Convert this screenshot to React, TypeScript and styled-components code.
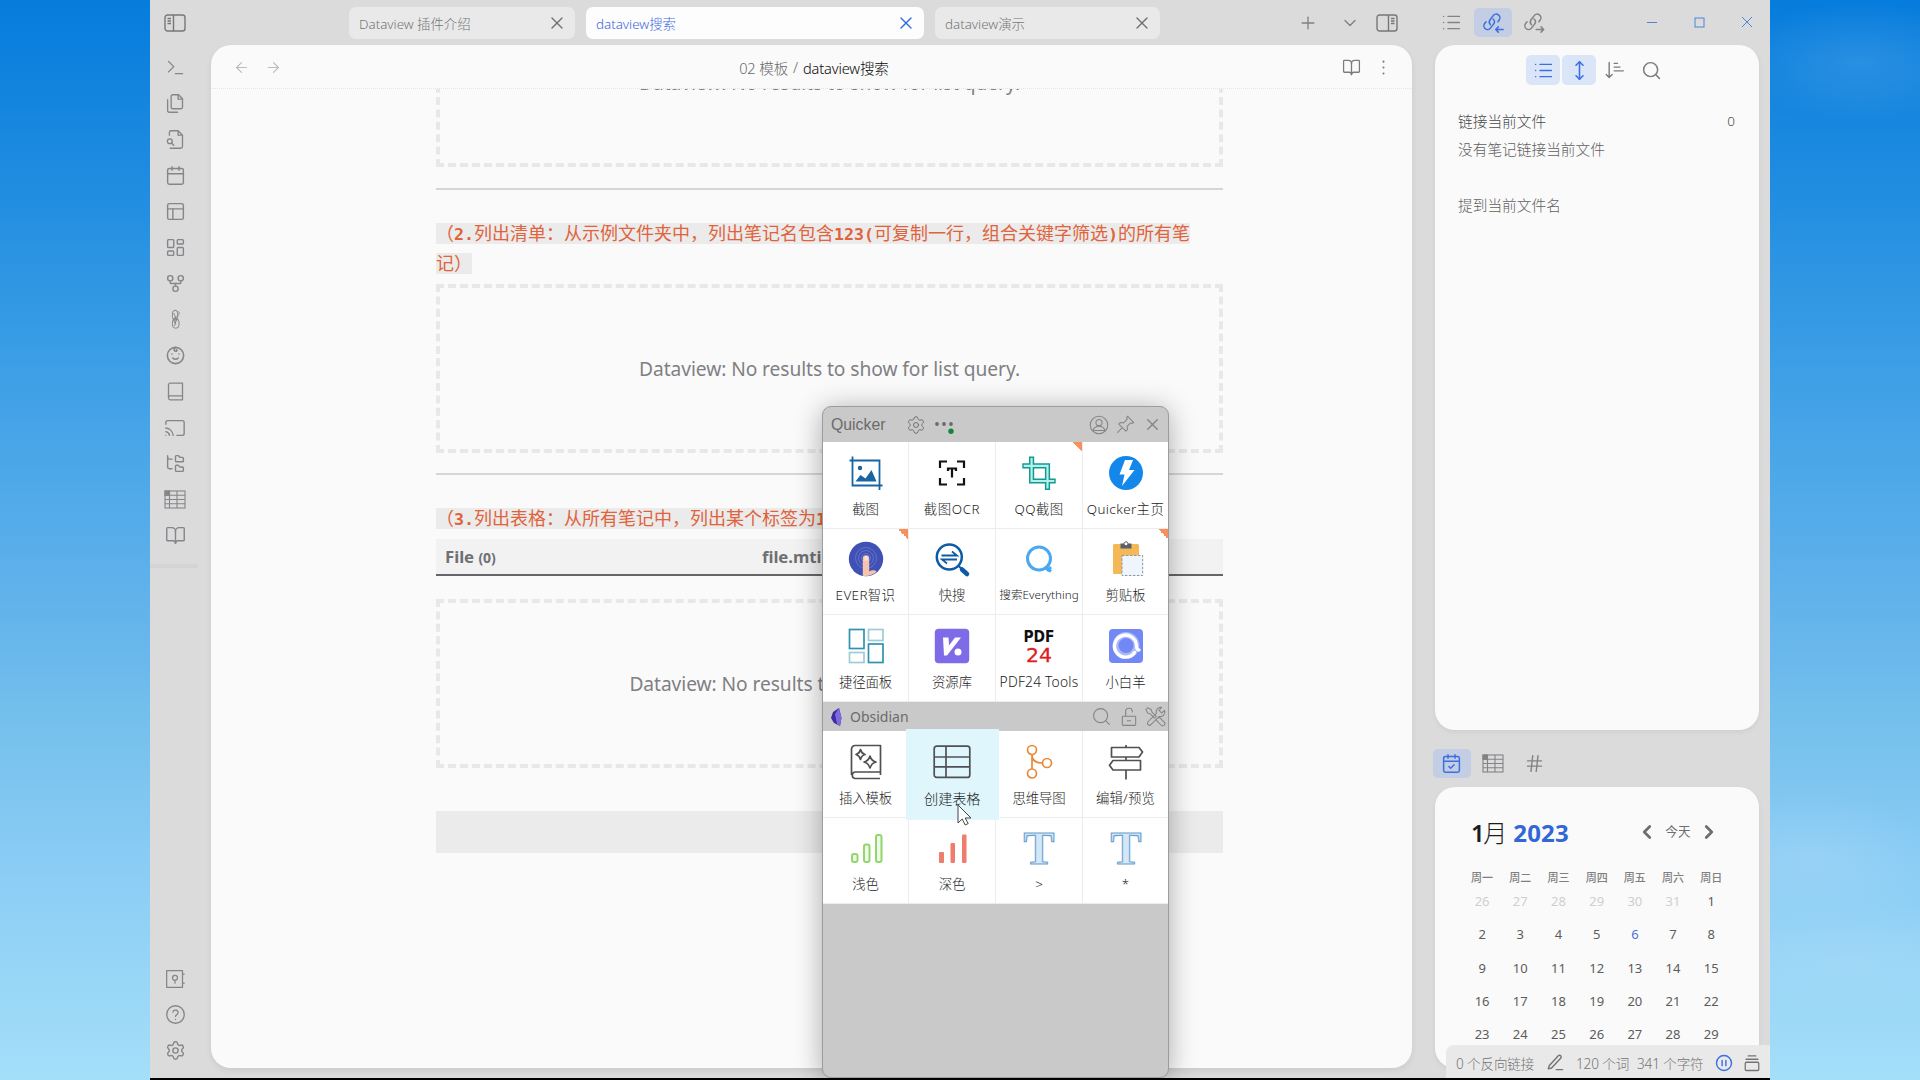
import React from "react";
import styled, { createGlobalStyle, css } from "styled-components";
import {
  Terminal, Calendar, PanelsTopLeft, LayoutDashboard, GitFork, Cast, FolderTree, BookOpen,
  Settings, List, MoveVertical, ArrowLeft, ArrowRight, X, Plus, ChevronDown, Search, Hash,
  ChevronLeft, ChevronRight,
} from "lucide-react";

const sans = `"Noto Sans", "Noto Sans CJK SC", sans-serif`;

const GlobalStyle = createGlobalStyle`
  * { box-sizing: border-box; }
  body { margin: 0; overflow: hidden; font-family: ${sans}; }
  svg { display: block; flex: none; overflow: visible; }
`;

/* ---------- shell ---------- */

const Desktop = styled.div`
  width: 1920px;
  height: 1080px;
  padding-left: 150px;
  background:
    radial-gradient(ellipse 130px 60px at 1860px 62px, rgba(150, 200, 245, 0.2), transparent),
    radial-gradient(ellipse 130px 70px at 1810px 860px, rgba(190, 225, 250, 0.28), transparent),
    radial-gradient(ellipse 180px 60px at 1850px 960px, rgba(190, 225, 250, 0.22), transparent),
    linear-gradient(#067cdc 0, #1f8ce0 180px, #3d9fe6 370px, #66b5ec 630px, #74c0ec 720px, #88cbf4 850px, #a4dff9 1080px);
`;

const Window = styled.div`
  position: relative;
  display: grid;
  grid-template-columns: 61px 1201px 324px;
  column-gap: 0;
  width: 1620px;
  height: 1080px;
  background: #dbdbdb;
  border-bottom: 2px solid #000;
`;

/* ---------- ribbon ---------- */

const Ribbon = styled.nav`
  display: flex;
  flex-direction: column;
  padding: 0 11px 9.5px 0;
  color: #85858a;
`;

const RibbonToggle = styled.div`
  display: flex;
  align-items: center;
  justify-content: center;
  height: 45.5px;
  margin-bottom: 4px;
`;

const RibbonItem = styled.div`
  display: flex;
  align-items: center;
  justify-content: center;
  height: 36px;
`;

const RibbonRule = styled.div`
  width: 48px;
  height: 4px;
  margin-top: 10px;
  background: #d4d4d4;
`;

const Spacer = styled.div`
  flex: 1;
`;

/* ---------- editor ---------- */

const Main = styled.main`
  display: flex;
  flex-direction: column;
  height: 1078px;
`;

const TabBar = styled.div`
  display: flex;
  align-items: center;
  height: 45px;
  padding: 1px 0 0 138px;
  color: #808085;
`;

const Tab = styled.div<{ $w: number; $active?: boolean }>`
  display: flex;
  align-items: center;
  justify-content: space-between;
  width: ${p => p.$w}px;
  height: 32px;
  margin-right: 11px;
  padding: 0 8px 1px 10px;
  border-radius: 7px;
  background: ${p => (p.$active ? "#fdfdfd" : "#e9e9e9")};
  color: ${p => (p.$active ? "#4068dc" : "#777777")};
  font-size: 13.4px;
  letter-spacing: -0.02px;
  font-weight: 300;
`;

const TabClose = styled.span<{ $active?: boolean }>`
  color: ${p => (p.$active ? "#2f6be0" : "#707070")};
`;

const BarIcon = styled.div<{ $ml: number }>`
  margin-left: ${p => p.$ml}px;
`;

const Page = styled.section`
  display: flex;
  flex-direction: column;
  height: 1023px;
  border-radius: 20px;
  overflow: hidden;
  background: #fafafa;
  box-shadow: 0 3px 6px rgba(0, 0, 0, 0.07);
`;

const PageHeader = styled.header`
  display: grid;
  grid-template-columns: 1fr auto 1fr;
  align-items: center;
  flex: none;
  height: 44px;
  padding-top: 2px;
  border-bottom: 1px dotted #e4e4e4;
  color: #7c7c7c;
`;

const NavArrows = styled.div`
  display: flex;
  gap: 15px;
  padding-left: 22px;
  color: #bcbcbc;
`;

const Crumb = styled.div`
  display: flex;
  gap: 5px;
  font-size: 14.6px;
  letter-spacing: -0.15px;
  font-weight: 300;
  color: #6a6a6a;
  padding-left: 5px;
`;

const CrumbCurrent = styled.span`
  color: #080808;
`;

const PageActions = styled.div`
  display: flex;
  justify-content: flex-end;
  align-items: center;
  gap: 13px;
  padding-right: 19.5px;
`;

const Scroller = styled.div`
  flex: 1;
  min-height: 0;
  overflow: hidden;
`;

const Doc = styled.div`
  width: 787px;
  margin-left: 225px;
`;

const EmptyResult = styled.div<{ $mt: number }>`
  display: flex;
  align-items: center;
  justify-content: center;
  height: 169px;
  margin-top: ${p => p.$mt}px;
  border: 4px dashed #e8e8e8;
  color: #808084;
  font-size: 19.2px;
  letter-spacing: -0.07px;
`;

const Rule = styled.div<{ $mt: number }>`
  height: 2px;
  margin-top: ${p => p.$mt}px;
  background: #d6d6d6;
`;

const Para = styled.div`
  display: flex;
  flex-direction: column;
  margin-top: 28px;
`;

const CodeLine = styled.div`
  display: flex;
  align-items: center;
  height: 30.5px;
`;

const Code = styled.code`
  height: 21px;
  line-height: 18px;
  white-space: nowrap;
  background: #ebebeb;
  color: #e0633c;
  font-family: "Noto Sans CJK SC", sans-serif;
  font-size: 18px;
  font-weight: 400;
`;

const Mono = styled.b`
  font-family: "DejaVu Sans Mono", monospace;
  font-size: 16.6px;
`;

const TableHead = styled.div`
  display: grid;
  grid-template-columns: 317px 1fr;
  align-items: center;
  height: 37.5px;
  margin-top: 5px;
  padding: 1px 0 0 9px;
  background: #f2f2f3;
  border-bottom: 2px solid #66666a;
  color: #707074;
  font-size: 16.8px;
  letter-spacing: -0.05px;
  font-weight: 700;
`;

const Count = styled.span`
  font-size: 14px;
`;

const CodeBlock = styled.div`
  height: 42px;
  margin-top: 43px;
  background: #ebebeb;
`;

/* ---------- right side ---------- */

const Side = styled.aside`
  display: flex;
  flex-direction: column;
  width: 338px;
  margin-left: 20px;
  height: 1078px;
`;

const SideTabs = styled.div<{ $h: number; $pt: number }>`
  display: flex;
  align-items: flex-start;
  flex: none;
  height: ${p => p.$h}px;
  padding-top: ${p => p.$pt}px;
`;

const SideTab = styled.div<{ $active?: boolean; $ml?: number }>`
  display: flex;
  align-items: center;
  justify-content: center;
  width: 38px;
  height: 29px;
  margin-left: ${p => p.$ml ?? 3.5}px;
  border-radius: 5px;
  color: #838387;
  ${p => p.$active && css`
    background: #c3cde3;
    color: #3b70e2;
  `}
`;

const WindowButtons = styled.div`
  display: flex;
  align-items: center;
  gap: 37px;
  height: 28px;
  margin-left: 93px;
  color: #4c84dc;
`;

const Card = styled.section<{ $h: number }>`
  flex: none;
  width: 324px;
  height: ${p => p.$h}px;
  margin-left: 3px;
  border-radius: 20px;
  background: #fafafa;
  box-shadow: 0 2px 5px rgba(0, 0, 0, 0.06);
`;

const LinkTools = styled.div`
  display: flex;
  gap: 2px;
  padding: 10px 0 0 91px;
  color: #7c7c7c;
`;

const Tool = styled.div<{ $active?: boolean }>`
  display: flex;
  align-items: center;
  justify-content: center;
  width: 34px;
  height: 30px;
  border-radius: 5px;
  ${p => p.$active && css`
    background: #dbe5f8;
    color: #3b70e2;
  `}
`;

const LinkRow = styled.div<{ $mt: number; $c: string }>`
  display: flex;
  justify-content: space-between;
  align-items: center;
  height: 24px;
  margin-top: ${p => p.$mt}px;
  padding: 0 24px 0 23px;
  color: ${p => p.$c};
  font-size: 14.7px;
  font-weight: 300;
`;

const Zero = styled.span`
  font-size: 13.5px;
`;

const CalHead = styled.div`
  display: flex;
  align-items: center;
  height: 34px;
  padding: 0 39px 0 36px;
  margin-top: 29px;
`;

const Month = styled.div`
  display: flex;
  gap: 6px;
  align-items: center;
  color: #1c1c1c;
  font-size: 24px;
  font-weight: 300;
  line-height: 34px;
`;

const MonthNo = styled.span`
  font-weight: 600;
  letter-spacing: -1.5px;
`;

const Year = styled.span`
  color: #3267d6;
  font-weight: 700;
  letter-spacing: 0.2px;
`;

const CalNav = styled.div`
  display: flex;
  align-items: center;
  gap: 7.5px;
  margin-left: auto;
  color: #6e6e6e;
  font-size: 12.6px;
  line-height: 20px;
  padding-bottom: 2px;
`;

const CalGrid = styled.div<{ $row: number; $up?: number }>`
  display: grid;
  grid-template-columns: repeat(7, 38.2px);
  grid-auto-rows: ${p => p.$row}px;
  align-items: center;
  justify-items: center;
  margin-top: ${p => -(p.$up ?? 0)}px;
  padding-left: 28px;
`;

const WeekDay = styled.span`
  color: #808080;
  font-size: 11px;
  font-weight: 500;
`;

const Day = styled.span<{ $tone: "out" | "now" | "in" }>`
  color: ${p => ({ out: "#cfcfcf", now: "#4a72dc", in: "#5c5c5c" })[p.$tone]};
  font-size: 13px;
`;

const StatusBar = styled.footer`
  position: absolute;
  right: 0;
  bottom: 0;
  display: flex;
  align-items: center;
  width: 324px;
  height: 33px;
  padding: 2px 10px 0 10px;
  border-radius: 8px 0 0 0;
  background: #e9e9e9;
  color: #747474;
  font-size: 13.6px;
  letter-spacing: -0.15px;
  font-weight: 300;
`;

const StatusItem = styled.span<{ $w: number; $blue?: boolean }>`
  display: flex;
  flex: none;
  width: ${p => p.$w}px;
  white-space: nowrap;
  ${p => p.$blue && css`color: #3b70e2;`}
`;

/* ---------- quicker popup ---------- */

const Popup = styled.div`
  position: absolute;
  left: 672px;
  top: 406px;
  display: flex;
  flex-direction: column;
  width: 347px;
  height: 671.5px;
  border: 1px solid #9c9c9c;
  border-radius: 9px;
  background: #c9c9c9;
  box-shadow: 0 3px 28px rgba(0, 0, 0, 0.32);
`;

const PopupHead = styled.div<{ $h: number; $pr: number }>`
  display: flex;
  align-items: center;
  flex: none;
  height: ${p => p.$h}px;
  padding: 0 ${p => p.$pr}px 0 8px;
  color: #6b6b6b;
`;

const PopupTitle = styled.span<{ $w: number }>`
  width: ${p => p.$w}px;
  font-family: "Liberation Sans", sans-serif;
  font-size: 15.8px;
`;

const ProfileTitle = styled.span`
  margin-left: 8px;
  font-size: 14px;
`;

const HeadIcons = styled.div<{ $gap: number }>`
  display: flex;
  align-items: center;
  gap: ${p => p.$gap}px;
  margin-left: auto;
  color: #858585;
`;

const Dots = styled.div`
  margin-left: 8px;
`;

const Tiles = styled.div`
  display: grid;
  grid-template-columns: 86px 87px 87px 85px;
  grid-auto-rows: 86.7px;
  flex: none;
  background: #fff;
`;

const Tile = styled.div<{ $flag?: boolean; $hover?: boolean }>`
  display: flex;
  flex-direction: column;
  align-items: center;
  padding-top: 12.7px;
  border-right: 1px solid #ececec;
  border-bottom: 1px solid #ececec;
  &:nth-child(4n) { border-right: 0; }
  ${p => p.$flag && css`
    background: linear-gradient(to top right, transparent 50%, #f98f5c 50%) top right / 10px 10px no-repeat;
  `}
  ${p => p.$hover && css`
    margin: -2.5px -2.5px -2.5px -3px;
    padding-top: 15px;
    border: 0;
    background: #dff6fd;
    z-index: 1;
  `}
`;

const TileLabel = styled.span<{ $size: number; $ls: number; $mt: number }>`
  height: 20px;
  margin-top: ${p => p.$mt}px;
  line-height: 20px;
  color: #1c1c1c;
  font-size: ${p => p.$size}px;
  letter-spacing: ${p => p.$ls}px;
  font-weight: 300;
  white-space: nowrap;
`;

const Pointer = styled.div`
  position: absolute;
  z-index: 2;
  left: 807px;
  top: 804px;
`;

/* ---------- drawings ---------- */

type IconProps = { size?: number; sw?: number; children: React.ReactNode };
const Glyph = ({ size = 21, sw = 1.5, children }: IconProps) => (
  <svg width={size} height={size} viewBox="0 0 24 24" fill="none" stroke="currentColor" strokeWidth={sw} strokeLinecap="round" strokeLinejoin="round">{children}</svg>
);

const SidebarToggle = ({ right }: { right?: boolean }) => (
  <svg width="22" height="18" viewBox="0 0 22 18" fill="none" stroke="#77777b" strokeWidth="1.4">
    <rect x="1" y="1" width="20" height="16" rx="2.5" />
    <path d={right ? "M12.5 1v16M15 4.5h3.500M15 7h3.500M15 9.500h3.500" : "M9.500 1v16M3.500 4.500h3.500M3.500 7h3.500M3.500 9.500h3.500"} />
  </svg>
);

const SheetIcon = () => (
  <svg width="22" height="19" viewBox="0 0 22 19" fill="none" stroke="currentColor" strokeWidth="1.1">
    <rect x="1" y="1" width="20" height="17" />
    <path d="M5.5 1v17M13 1v17M1 5.3h20M1 9.5h20M1 13.7h20" />
    <rect x="1" y="1" width="4.5" height="4.3" fill="currentColor" />
  </svg>
);

const LinkIcon = ({ out }: { out?: boolean }) => (
  <Glyph size={21} sw={1.7}>
    <path d="M8.500 14.500a4.300 4.300 0 0 1-.4-5.600l3.600-4.800a4.200 4.200 0 0 1 6.800 5l-1.500 2" />
    <path d="M11.500 8a4.300 4.300 0 0 1 .6 5.800l-3.600 4.600a4.200 4.200 0 0 1-6.600-5.200l1.600-2" />
    {out ? <path d="M14 20h8M19.500 17l3 3-3 3" /> : <path d="M15 20h8M17.500 17l-3 3 3 3" />}
  </Glyph>
);

const ribbonIcons = [
  <Terminal size={21} strokeWidth={1.6} />,
  <Glyph>
    <path d="M15.500 2H8.600c-.4 0-.8.2-1.100.5-.3.3-.5.7-.5 1.100v12.800c0 .4.2.8.5 1.100.3.3.7.5 1.100.5h9.800c.4 0 .8-.2 1.100-.5.3-.3.5-.7.5-1.100V6.500L15.500 2z" />
    <path d="M3 7.600v12.800c0 .4.2.8.5 1.100.3.3.7.5 1.100.5h9.800M15 2v5h5" />
  </Glyph>,
  <Glyph>
    <path d="M5 7V4a2 2 0 0 1 2-2h8l5 5v13a2 2 0 0 1-2 2H6M15 2v5h5" />
    <circle cx="5.500" cy="14" r="2.800" /><path d="M7.600 16.200L10 18.600" />
  </Glyph>,
  <Calendar size={21} strokeWidth={1.6} />,
  <PanelsTopLeft size={21} strokeWidth={1.6} />,
  <LayoutDashboard size={21} strokeWidth={1.6} />,
  <GitFork size={21} strokeWidth={1.6} />,
  <Glyph size={21} sw={1.1}>
    <rect x="8.500" y="1.500" width="6" height="11" rx="3" /><rect x="8.500" y="11" width="7.500" height="11" rx="3.700" />
    <path d="M15 3c3 1 1 3-1 5s-5 4-3 6 4-3 1-4-3 4 0 7M10 5l3 6M13 12l-2 7" />
  </Glyph>,
  <Glyph sw={1.8}>
    <circle cx="12" cy="12" r="9.300" />
    <path d="M12 2.800c-2.500 1.200-2 4.200.3 4.400 1.400 0 1.700-1.400.7-1.700M8 10.300v.1M16 10.300v.1M9 15c1.800 1.500 4.200 1.500 6 0" />
  </Glyph>,
  <Glyph><path d="M4 19.500V4.500A2 2 0 0 1 6 2.500h14v19H6a2 2 0 0 1-2-2 2 2 0 0 1 2-2.500h14" /></Glyph>,
  <Cast size={22} strokeWidth={1.5} />,
  <FolderTree size={21} strokeWidth={1.6} />,
  <SheetIcon />,
  <BookOpen size={21} strokeWidth={1.6} />,
];

const Shot = () => (
  <g stroke="#1765a3" strokeWidth="1.800" fill="none">
    <path d="M1.500 5.500H31.500V35M4.500 1.500V30.500H34.500" />
    <circle cx="12" cy="13" r="2.200" fill="#1765a3" stroke="none" />
    <path d="M7.500 26.500l5-6.500 5 3.500 6-8.500 5 11.500z" fill="#1765a3" stroke="none" />
  </g>
);
const Ocr = () => (
  <g>
    <path d="M6 13V6.500h7M23 6.500h7V13M30 23v6.500h-7M13 29.500H6V23" stroke="#111" strokeWidth="2.200" fill="none" />
    <path d="M14 16v-2.500h8V16M18 13.500v9" stroke="#111" strokeWidth="2.200" fill="none" />
  </g>
);
const QqShot = () => (
  <g fill="none">
    <path d="M10.600 1.500V26H34.700M1.300 10.800H26.500V35" stroke="#129a90" strokeWidth="5.200" />
    <path d="M10.600 2.900V26H33.300M2.700 10.800H26.500V33.600" stroke="#b5f1ec" strokeWidth="2.200" />
  </g>
);
const Bolt = () => (
  <g><circle cx="18" cy="18" r="17" fill="#1488ea" /><path d="M17 5h8l-4 10h5.500L14 31l2.500-11.500H11.500z" fill="#fff" /></g>
);
const Touch = () => (
  <g>
    <circle cx="18" cy="18" r="17.200" fill="#3f51b5" />
    <g fill="none" stroke="#6a78d0" strokeWidth=".8"><circle cx="18" cy="17" r="4.500" /><circle cx="18" cy="17" r="7.500" /><circle cx="18" cy="17" r="10.500" /></g>
    <path d="M14.800 34.800V17.500a3.200 3.200 0 0 1 6.400 0v13c3-2 6-1 7.500 0a17 17 0 0 1-13.900 4.300z" fill="#f6c4ae" />
    <path d="M16.500 16.500a1.600 1.600 0 0 1 3.200 0v3h-3.200z" fill="#fbe3da" />
  </g>
);
const QuickSearch = () => (
  <g stroke="#0d5ba6" fill="none">
    <circle cx="15.300" cy="16" r="12.500" strokeWidth="2.500" />
    <path d="M24.500 25l4 3.500" strokeWidth="2" /><path d="M28 28.500l5 4.500" strokeWidth="4.500" strokeLinecap="round" />
    <path d="M7.500 14.500H23l-5-4M23 18.500H8l5 4" strokeWidth="1.800" />
  </g>
);
const Everything = () => (
  <g fill="none" stroke="#4aa8f2"><circle cx="18" cy="17.500" r="11.500" strokeWidth="3" /><path d="M24 26l6 4.500M30 26l-4 4" strokeWidth="3" /></g>
);
const Clip = () => (
  <g>
    <rect x="5" y="3" width="26" height="30" rx="1.500" fill="#f4b856" />
    <path d="M12.500 2.500h11v5h-11z" fill="#5d5f66" /><circle cx="18" cy="2.800" r="2" fill="#fff" stroke="#5d5f66" />
    <rect x="14" y="14.500" width="20.700" height="20" fill="#eef5fc" stroke="#8a98a8" strokeDasharray="2.500 1.500" />
  </g>
);
const Shortcuts = () => (
  <g fill="#fff" strokeWidth="1.700">
    <rect x="1.500" y="1.500" width="14.500" height="19" stroke="#2f93b0" /><rect x="20.500" y="1.500" width="14.500" height="11" stroke="#9fcbd6" />
    <rect x="1.500" y="24.500" width="14.500" height="10" stroke="#9fcbd6" /><rect x="20.500" y="16" width="14.500" height="18.500" stroke="#2f93b0" />
  </g>
);
const Library = () => (
  <g><rect x=".8" y=".8" width="34.400" height="34.400" rx="4" fill="#7d6be8" /><path d="M9 9.500h5.500l.5 8 6-8h6L13 27.500h-3z" fill="#fff" /><circle cx="24" cy="24" r="3.500" fill="#fff" /></g>
);
const Pdf24 = () => (
  <g textAnchor="middle" fontFamily="DejaVu Sans">
    <text x="18" y="14" fontSize="15" fontWeight="700" fill="#111" textLength="31" lengthAdjust="spacingAndGlyphs">PDF</text>
    <text x="18" y="33.500" fontSize="20" fill="#e01c1c" stroke="#e01c1c" strokeWidth=".3" textLength="26" lengthAdjust="spacingAndGlyphs">24</text>
  </g>
);
const Sheep = () => (
  <g><rect x="1" y="1" width="34" height="34" rx="4" fill="#7288f4" /><circle cx="18" cy="17.500" r="10.500" fill="none" stroke="#a9b7fb" strokeWidth="6" /><path d="M26.500 24.500a11 11 0 1 1 2-7c0 4 1 4.500 2.500 4.500" fill="none" stroke="#fff" strokeWidth="3.400" strokeLinecap="round" /></g>
);
const dark = { stroke: "#505054", strokeWidth: 1.7, fill: "none", strokeLinejoin: "round" as const };
const Template = () => (
  <g {...dark}>
    <path d="M3.500 31V5a3.500 3.500 0 0 1 3.500-3.500H32.500V28H7a3.300 3.300 0 0 0 0 6.500H32M32.500 28v3" />
    <path d="M12.500 5.500q1 4 4.500 5-3.500 1-4.500 5-1-4-4.500-5 3.500-1 4.500-5zM22 12q1.500 5 6 6-4.500 1-6 6-1.500-5-6-6 4.500-1 6-6z" />
  </g>
);
const Grid = () => (
  <g {...dark}><rect x=".2" y="2.200" width="35.600" height="31.200" rx="2.500" /><path d="M12 2.200V33.400M.2 13h35.600M.2 22.800h35.600" /></g>
);
const Mind = () => (
  <g stroke="#e8893a" strokeWidth="1.700" fill="none"><circle cx="11" cy="6" r="4.500" /><circle cx="11" cy="29.500" r="4.500" /><circle cx="26" cy="19" r="4.500" /><path d="M11 10.500V25M11 11c0 6 4 8 10.500 8" /></g>
);
const Signs = () => (
  <g {...dark}><path d="M18 1v2.500M18 13v3.500M18 26v9.500M3.500 3.500H31l3.500 4.500L31 13H3.500zM5 16.500H32.500V26H5L1.500 21.200z" /></g>
);
const LightBars = () => (
  <g fill="#f0faeb" stroke="#92d66c" strokeWidth="2"><rect x="4" y="24" width="5.500" height="8" rx="2" /><rect x="16" y="14.500" width="5.500" height="17.500" rx="2" /><rect x="28" y="5" width="5.500" height="27" rx="2" /></g>
);
const DarkBars = () => (
  <g fill="#ee7d6e"><rect x="5" y="22" width="5" height="11" rx="1" /><rect x="16.500" y="13" width="4.500" height="20" rx="1" /><rect x="28" y="4.500" width="4.500" height="28.500" rx="1" /></g>
);
const Tee = () => (
  <text x="18" y="34" fontSize="46" fontWeight="700" fontFamily="Liberation Serif" textAnchor="middle" fill="#d3e8f7" stroke="#6f9fce" strokeWidth="1.100" textLength="31" lengthAdjust="spacingAndGlyphs">T</text>
);

type TileDef = { label: string; art: React.ReactNode; flag?: boolean; hover?: boolean; size?: number; ls?: number };
const globalTiles: TileDef[] = [
  { label: "截图", art: <Shot /> },
  { label: "截图OCR", art: <Ocr />, ls: 0.6 },
  { label: "QQ截图", art: <QqShot />, flag: true, ls: 0.4 },
  { label: "Quicker主页", art: <Bolt />, ls: 0.4 },
  { label: "EVER智识", art: <Touch />, flag: true, ls: 0.4 },
  { label: "快搜", art: <QuickSearch /> },
  { label: "搜索Everything", art: <Everything />, size: 11.6, ls: 0.05 },
  { label: "剪贴板", art: <Clip />, flag: true },
  { label: "捷径面板", art: <Shortcuts /> },
  { label: "资源库", art: <Library /> },
  { label: "PDF24 Tools", art: <Pdf24 />, size: 13.8, ls: 0.2 },
  { label: "小白羊", art: <Sheep /> },
];
const obsidianTiles: TileDef[] = [
  { label: "插入模板", art: <Template /> },
  { label: "创建表格", art: <Grid />, hover: true, size: 14.2 },
  { label: "思维导图", art: <Mind /> },
  { label: "编辑/预览", art: <Signs />, ls: 0.2 },
  { label: "浅色", art: <LightBars /> },
  { label: "深色", art: <DarkBars /> },
  { label: ">", art: <Tee /> },
  { label: "*", art: <Tee /> },
];

const TileGrid = ({ items }: { items: TileDef[] }) => (
  <Tiles>
    {items.map(t => (
      <Tile key={t.label} $flag={t.flag} $hover={t.hover}>
        <svg width="36" height="36" viewBox="0 0 36 36">{t.art}</svg>
        <TileLabel $size={t.size ?? 13.4} $ls={t.ls ?? -0.1} $mt={t.hover ? 9 : 8}>{t.label}</TileLabel>
      </Tile>
    ))}
  </Tiles>
);

const weekDays = ["周一", "周二", "周三", "周四", "周五", "周六", "周日"];
const days = [26, 27, 28, 29, 30, 31, ...Array.from({ length: 29 }, (_, i) => i + 1)];

export default function App() {
  return (
    <Desktop>
      <GlobalStyle />
      <Window>
        <Ribbon>
          <RibbonToggle><SidebarToggle /></RibbonToggle>
          {ribbonIcons.map((icon, i) => <RibbonItem key={i}>{icon}</RibbonItem>)}
          <RibbonRule />
          <Spacer />
          <RibbonItem>
            <Glyph size={20}><path d="M2 2h19v20H2zM21 6h2M21 17h2M12 13.500V17" /><circle cx="12" cy="10.500" r="3" /></Glyph>
          </RibbonItem>
          <RibbonItem>
            <Glyph><circle cx="12" cy="12" r="10" /><path d="M9 9.200a3 3 0 0 1 5.900.8c0 2-2.900 2.600-2.900 4.200M12 17.500v.1" /></Glyph>
          </RibbonItem>
          <RibbonItem><Settings size={21} strokeWidth={1.6} /></RibbonItem>
        </Ribbon>

        <Main>
          <TabBar>
            <Tab $w={226}>Dataview 插件介绍<TabClose><X size={20} strokeWidth={1.6} /></TabClose></Tab>
            <Tab $w={338} $active>dataview搜索<TabClose $active><X size={20} strokeWidth={1.6} /></TabClose></Tab>
            <Tab $w={225}>dataview演示<TabClose><X size={20} strokeWidth={1.6} /></TabClose></Tab>
            <BarIcon $ml={127}><Plus size={20} strokeWidth={1.6} /></BarIcon>
            <BarIcon $ml={22}><ChevronDown size={20} strokeWidth={1.6} /></BarIcon>
            <BarIcon $ml={16}><SidebarToggle right /></BarIcon>
          </TabBar>
          <Page>
            <PageHeader>
              <NavArrows><ArrowLeft size={17} strokeWidth={1.600} /><ArrowRight size={17} strokeWidth={1.600} /></NavArrows>
              <Crumb><span>02 模板</span><span>/</span><CrumbCurrent>dataview搜索</CrumbCurrent></Crumb>
              <PageActions>
                <BookOpen size={19} strokeWidth={1.600} />
                <Glyph size={19} sw={2.600}><path d="M12 4.500v.1M12 12v.1M12 19.500v.1" /></Glyph>
              </PageActions>
            </PageHeader>
            <Scroller>
              <Doc>
                <EmptyResult $mt={-91}>Dataview: No results to show for list query.</EmptyResult>
                <Rule $mt={21} />
                <Para>
                  <CodeLine>
                    <Code>（<Mono>2.</Mono>列出清单：从示例文件夹中，列出笔记名包含<Mono>123(</Mono>可复制一行，组合关键字筛选<Mono>)</Mono>的所有笔</Code>
                  </CodeLine>
                  <CodeLine><Code>记）</Code></CodeLine>
                </Para>
                <EmptyResult $mt={5}>Dataview: No results to show for list query.</EmptyResult>
                <Rule $mt={20} />
                <Para>
                  <CodeLine>
                    <Code>（<Mono>3.</Mono>列出表格：从所有笔记中，列出某个标签为<Mono>1</Mono></Code>
                  </CodeLine>
                </Para>
                <TableHead><span>File <Count>(0)</Count></span><span>file.mtime</span></TableHead>
                <EmptyResult $mt={23}>Dataview: No results to show for table query.</EmptyResult>
                <CodeBlock />
              </Doc>
            </Scroller>
          </Page>
        </Main>

        <Side>
          <SideTabs $h={45} $pt={8}>
            <SideTab $ml={0.5}><List size={21} strokeWidth={1.700} /></SideTab>
            <SideTab $active><LinkIcon /></SideTab>
            <SideTab><LinkIcon out /></SideTab>
            <WindowButtons>
              <svg width="10" height="10" viewBox="0 0 10 10" stroke="currentColor"><path d="M0 5.500h10" /></svg>
              <svg width="11" height="11" viewBox="0 0 11 11" fill="none" stroke="currentColor"><rect x="1" y="1" width="9" height="9" /></svg>
              <svg width="10" height="10" viewBox="0 0 10 10" stroke="currentColor"><path d="M0 0l10 10M10 0L0 10" /></svg>
            </WindowButtons>
          </SideTabs>
          <Card $h={685}>
            <LinkTools>
              <Tool $active><List size={21} strokeWidth={1.700} /></Tool>
              <Tool $active><MoveVertical size={21} strokeWidth={1.800} /></Tool>
              <Tool><Glyph size={20} sw={1.700}><path d="M5 3v18M1.500 17.500L5 21l3.500-3.500M11 4h4M11 8.500h7M11 13h11" /></Glyph></Tool>
              <Tool><Search size={21} strokeWidth={1.700} /></Tool>
            </LinkTools>
            <LinkRow $mt={23.5} $c="#4a4a4a"><span>链接当前文件</span><Zero>0</Zero></LinkRow>
            <LinkRow $mt={4} $c="#606060"><span>没有笔记链接当前文件</span></LinkRow>
            <LinkRow $mt={32} $c="#606060"><span>提到当前文件名</span></LinkRow>
          </Card>
          <SideTabs $h={57} $pt={19}>
            <SideTab $active $ml={0.5}>
              <Glyph size={21} sw={1.700}><rect x="3" y="4" width="18" height="18" rx="2" /><path d="M8 2v4M16 2v4M3 9.500h18M9 15.500l2 2 4-4" /></Glyph>
            </SideTab>
            <SideTab><SheetIcon /></SideTab>
            <SideTab><Hash size={21} strokeWidth={1.600} /></SideTab>
          </SideTabs>
          <Card $h={281}>
            <CalHead>
              <Month><span><MonthNo>1</MonthNo>月</span><Year>2023</Year></Month>
              <CalNav><ChevronLeft size={22} strokeWidth={3} />今天<ChevronRight size={22} strokeWidth={3} /></CalNav>
            </CalHead>
            <CalGrid $row={54}>{weekDays.map(d => <WeekDay key={d}>{d}</WeekDay>)}</CalGrid>
            <CalGrid $row={33.3} $up={19.5}>
              {days.map((d, i) => <Day key={i} $tone={i < 6 ? "out" : d === 6 ? "now" : "in"}>{d}</Day>)}
            </CalGrid>
          </Card>
        </Side>

        <StatusBar>
          <StatusItem $w={90}>0 个反向链接</StatusItem>
          <StatusItem $w={30}><Glyph size={19} sw={1.800}><path d="M13 21h8M3 20l1-4L15.500 3.500a2 2 0 0 1 3 3L7 19z" /></Glyph></StatusItem>
          <StatusItem $w={61}>120 个词</StatusItem>
          <StatusItem $w={78}>341 个字符</StatusItem>
          <StatusItem $w={28} $blue><Glyph size={18} sw={1.900}><circle cx="12" cy="12" r="10" /><path d="M9.500 8.500v7M14.500 8.500v7" /></Glyph></StatusItem>
          <StatusItem $w={20}><Glyph size={18} sw={1.700}><rect x="3" y="11" width="18" height="11" rx="1.500" /><path d="M4 7h16M7 2.500h10" /></Glyph></StatusItem>
        </StatusBar>

        <Popup>
          <PopupHead $h={35} $pr={6.5}>
            <PopupTitle $w={75}>Quicker</PopupTitle>
            <Settings size={20} strokeWidth={1.100} />
            <Dots>
              <svg width="20" height="16" viewBox="0 0 20 16">
                <g fill="#6b6b6b"><circle cx="3" cy="7" r="1.900" /><circle cx="10" cy="7" r="1.900" /><circle cx="17" cy="7" r="1.900" /></g>
                <circle cx="17" cy="14.300" r="2.700" fill="#12883a" />
              </svg>
            </Dots>
            <HeadIcons $gap={7.5}>
              <Glyph size={20} sw={1.300}><circle cx="12" cy="12" r="10.500" /><circle cx="12" cy="9" r="3.700" /><path d="M5 18.500c1-4 3.500-5 7-5s6 1 7 5z" /></Glyph>
              <Glyph size={19} sw={1.300}><path d="M14.500 1.500l8 8-2 1-2-.5-4.500 4.500.5 4-2 2L3.500 11.500l2-2 4 .5L14 5.500l-.5-2zM8 16l-6 6" /></Glyph>
              <X size={19} strokeWidth={1.800} />
            </HeadIcons>
          </PopupHead>
          <TileGrid items={globalTiles} />
          <PopupHead $h={29} $pr={2}>
            <svg width="11" height="18" viewBox="0 0 11 18"><path d="M8 0L2 4 0 10l3 5 6 3 1.500-8z" fill="#3c2c9c" /><path d="M8 0L4 6l2 10 3 2 1.500-8z" fill="#7c6be0" /></svg>
            <ProfileTitle>Obsidian</ProfileTitle>
            <HeadIcons $gap={6.5}>
              <Search size={21} strokeWidth={1.200} />
              <Glyph size={20} sw={1.300}><rect x="4" y="11" width="16" height="11" rx="1" /><path d="M8 11V6a4 4 0 0 1 8-1v1M10 16.500h4" /></Glyph>
              <Glyph size={21} sw={1.200}><path d="M3 2l4 2 1 3 5 5-2 2-5-5-3-1-2-4zM15 13l2 .5 5 5a2.200 2.200 0 0 1-3.500 3.500l-5-5-.5-2M22.500 5L19 8l-3-3 3-3.500a5.500 5.500 0 0 0-6 7L3.500 18a2.300 2.300 0 0 0 3.300 3.300L16 12a5.500 5.500 0 0 0 6.500-7z" /></Glyph>
            </HeadIcons>
          </PopupHead>
          <TileGrid items={obsidianTiles} />
        </Popup>

        <Pointer>
          <svg width="16" height="22" viewBox="0 0 16 22"><path d="M1 1v18l4.200-4 3 6 3-1.500-3-5.500H14z" fill="#fff" fillOpacity=".8" stroke="#444" /></svg>
        </Pointer>
      </Window>
    </Desktop>
  );
}
